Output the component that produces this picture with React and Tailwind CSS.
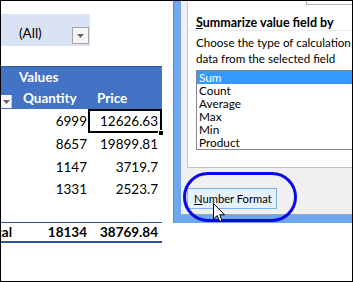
import React from "react";

const rows = [
  ["6999", "12626.63"],
  ["8657", "19899.81"],
  ["1147", "3719.7"],
  ["1331", "2523.7"],
];
const rowH = ["h-[24px]", "h-[23px]", "h-[23px]", "h-[21px]"];
const items = ["Sum", "Count", "Average", "Max", "Min", "Product"];

function Arrow({ color = "#555" }) {
  return (
    <svg width="7" height="4" viewBox="0 0 7 4">
      <path d="M0 0 L7 0 L3.5 4 Z" fill={color} />
    </svg>
  );
}

function Sheet() {
  return (
    <div className="w-[172px] shrink-0 text-[13.5px] text-black" style={{ fontFamily: "Lato, 'Liberation Sans', sans-serif" }}>
      <div className="h-[13px]" />
      {/* report filter */}
      <div className="w-[89px] h-[32px] bg-[#dae3f3] flex items-end pb-[2px]">
        <span className="ml-[18px] mb-[2px] leading-[17px]">(All)</span>
        <div className="ml-auto mr-[1px] w-[17px] h-[17px] border border-[#a6a6a6] bg-[#f4f4f4] flex items-center justify-center">
          <Arrow color="#666" />
        </div>
      </div>
      <div className="h-[20px]" />

      {/* header */}
      <div className="w-[161px] bg-[#4472c4] border-t border-[#2f5597] text-white font-bold">
        <div className="h-[21px] leading-[21px] pl-[18px]">Values</div>
        <div className="h-[21px] flex">
          <div className="w-[13px] flex items-end">
            <div className="w-[11px] h-[13px] mb-[1px] bg-[#f7f7f7] border-r border-[#c8c8c8] flex items-center justify-center">
              <Arrow color="#666" />
            </div>
          </div>
          <div className="w-[74px] pl-[9px] leading-[21px]">Quantity</div>
          <div className="w-[74px] pl-[9px] leading-[21px]">Price</div>
        </div>
      </div>

      {/* data */}
      {rows.map((r, i) => (
        <div key={i} className={`w-[161px] flex ${rowH[i]}`}>
          <div className="w-[13px]" />
          <div className="w-[74px] flex items-center justify-end pr-[1px]">{r[0]}</div>
          {i === 0 ? (
            <div className="relative w-[74px] border-2 border-black flex items-center justify-end pr-[2px]">
              {r[1]}
              <div className="absolute -right-[4px] -bottom-[5px] w-[6px] h-[6px] bg-black border border-white" />
            </div>
          ) : (
            <div className="w-[74px] flex items-center justify-end pr-[4px]">{r[1]}</div>
          )}
        </div>
      ))}
      <div className="h-[22px]" />

      {/* grand total */}
      <div className="w-[161px] h-[21px] flex font-bold border-t border-b-2 border-[#2f5597]">
        <div className="w-[13px] flex items-center justify-end overflow-hidden pr-[2px] whitespace-nowrap">Grand Total</div>
        <div className="w-[74px] flex items-center justify-end pr-[1px]">18134</div>
        <div className="w-[74px] flex items-center justify-end pr-[4px]">38769.84</div>
      </div>
    </div>
  );
}

function Dialog() {
  return (
    <div className="w-[180px] h-[222px] shrink-0 bg-[#6ea7ef] border-l border-[#5089d6] pl-[7px] pb-[8px] flex flex-col" style={{ fontFamily: "Lato, 'Liberation Sans', sans-serif" }}>
      <div className="flex-1 bg-[#f0f0f0] border-b border-[#9aa8b8] pl-[6px] flex flex-col overflow-hidden">
        {/* tab page */}
        <div className="h-[167px] bg-white border-l border-b border-[#c4c4c4] flex flex-col text-[11.5px] text-black">
          <div className="h-[4px] flex">
            <div className="w-[118px]" />
            <div className="flex-1 border-l border-b border-[#b4b4b4]" />
          </div>
          <div className="mt-[10px] pl-[8px] font-bold text-[12.5px] leading-[15px] whitespace-nowrap">
            <span className="underline">S</span>ummarize value field by
          </div>
          <div className="h-px bg-[#ececec]" />
          <div className="mt-[4px] pl-[8px] leading-[16px] whitespace-nowrap text-[11.6px]">
            <div>Choose the type of calculation that you want to use to summarize</div>
            <div>data from the selected field</div>
          </div>
          <div className="mt-[3px] ml-[8px] w-[200px] border border-[#828790]">
            {items.map((it, i) => (
              <div
                key={it}
                className={`h-[13px] leading-[13px] pl-[2px] text-[11.8px] ${i === 0 ? "bg-[#3399ff] text-white" : ""}`}
              >
                {it}
              </div>
            ))}
          </div>
        </div>
        {/* buttons area */}
        <div className="mt-[17px]">
          <button className="w-[90px] h-[21px] bg-[#e5f1fb] border border-[#7eb4ea] text-[11.2px] text-black text-left pl-[6px] leading-[19px]">
            <span className="underline">N</span>umber Format
          </button>
        </div>
      </div>
    </div>
  );
}

export default function App() {
  return (
    <div className="relative w-[353px] h-[282px] border border-black bg-white flex items-start overflow-hidden">
      <Sheet />
      <Dialog />
      {/* annotation */}
      <div className="absolute left-[182px] top-[171px] w-[114px] h-[50px] rounded-full border-[3px] border-[#0a0ae8]" />
      {/* mouse cursor */}
      <svg className="absolute left-[212px] top-[202px]" width="13" height="20" viewBox="0 0 13 20">
        <path d="M0.5 0.5 L0.5 16 L4.2 12.6 L6.6 18.5 L9 17.4 L6.7 11.8 L11.5 11.8 Z" fill="white" stroke="black" strokeWidth="1" strokeLinejoin="miter" />
      </svg>
    </div>
  );
}
